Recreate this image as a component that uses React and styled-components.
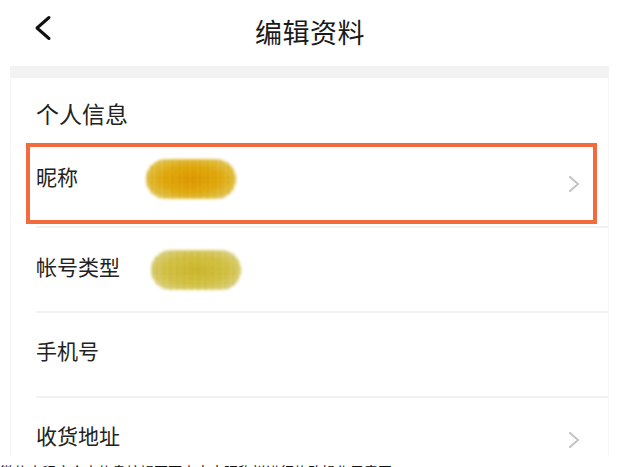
import React from 'react';
import styled, { createGlobalStyle, css } from 'styled-components';

const GlobalStyle = createGlobalStyle`
  html, body {
    margin: 0;
    padding: 0;
    background: #fff;
  }
  body {
    font-family: "Noto Sans CJK SC", "Noto Sans", sans-serif;
    color: #222;
  }
`;

const Page = styled.div`
  width: 618px;
  height: 467px;
  overflow: hidden;
  background: #fff;
`;

const Header = styled.header`
  position: relative;
  display: flex;
  justify-content: center;
  align-items: center;
  height: 62px;
  padding-bottom: 4px;
`;

const BackButton = styled.button`
  position: absolute;
  left: 32px;
  top: 14px;
  display: flex;
  padding: 0;
  border: none;
  background: none;
`;

const Title = styled.h1`
  margin: 0 0 0 2px;
  font-size: 27px;
  font-weight: 400;
  letter-spacing: 0.5px;
  color: #1a1a1a;
`;

const Card = styled.section`
  height: 378px;
  margin: 0 9px 0 10px;
  border-top: 12px solid #f2f2f2;
  border-left: 1px solid #f6f6f6;
  border-right: 1px solid #f6f6f6;
  overflow: hidden;
`;

const SectionTitle = styled.h2`
  margin: 0;
  height: 63px;
  padding: 17px 0 0 25px;
  box-sizing: border-box;
  font-size: 23px;
  line-height: 36px;
  font-weight: 400;
  color: #222;
`;

const Row = styled.div`
  position: relative;
  display: flex;
  align-items: center;
  height: 85px;
  padding: 0 28px 0 25px;
  box-sizing: border-box;

  & + & {
    border-top: 2px solid #f1f1f1;
    margin-left: 25px;
    padding-left: 0;
  }
`;

const Label = styled.span`
  width: 110px;
  flex-shrink: 0;
  margin-bottom: ${({ $lift }) => $lift * 2}px;
  font-size: 21px;
  line-height: 30px;
  color: #222;
`;

const Blob = styled.div`
  width: 90px;
  height: 40px;
  margin-left: ${({ $shift }) => $shift}px;
  margin-bottom: ${({ $lift }) => $lift * 2}px;
  border-radius: 22px;
  filter: blur(1.4px);
  ${({ $tone }) =>
    $tone === 'orange'
      ? css`
          background:
            radial-gradient(rgba(60, 40, 0, 0.7) 0.6px, transparent 1.1px) 0 0 / 4px 3px,
            radial-gradient(rgba(90, 60, 0, 0.45) 0.6px, transparent 1.1px) 2px 1px / 7px 5px,
            radial-gradient(ellipse at center, #f5a800 0%, #f7bb10 45%, #f8d650 75%, rgba(255, 240, 170, 0.2) 100%);
        `
      : css`
          background:
            radial-gradient(rgba(60, 55, 10, 0.6) 0.6px, transparent 1.1px) 0 0 / 4px 3px,
            radial-gradient(rgba(80, 70, 20, 0.45) 0.6px, transparent 1.1px) 2px 1px / 7px 5px,
            radial-gradient(ellipse at center, #dcc630 0%, #e5d24c 50%, #ede087 78%, rgba(250, 245, 200, 0.2) 100%);
        `}
`;

const Arrow = styled.svg`
  margin-left: auto;
  flex-shrink: 0;
`;

const Highlight = styled.div`
  position: absolute;
  left: 15px;
  right: 11px;
  top: 2px;
  bottom: 2px;
  border: 4px solid #f36b3c;
  pointer-events: none;
`;

const Caption = styled.p`
  margin: 5px 0 0;
  font-size: 14px;
  line-height: 20px;
  color: #111;
  white-space: nowrap;
`;

const ChevronRight = () => (
  <Arrow width="12" height="18" viewBox="0 0 12 18">
    <polyline
      points="2,2 10,9 2,16"
      fill="none"
      stroke="#c6c6c6"
      strokeWidth="2.2"
      strokeLinecap="round"
      strokeLinejoin="round"
    />
  </Arrow>
);

const App = () => {
  return (
    <Page>
      <GlobalStyle />
      <Header>
        <BackButton aria-label="返回">
          <svg width="22" height="28" viewBox="0 0 22 28">
            <polyline
              points="17,3.5 5,14 17,24.5"
              fill="none"
              stroke="#111"
              strokeWidth="3"
              strokeLinecap="round"
              strokeLinejoin="round"
            />
          </svg>
        </BackButton>
        <Title>编辑资料</Title>
      </Header>
      <Card>
        <SectionTitle>个人信息</SectionTitle>
        <Row>
          <Label $lift={8}>昵称</Label>
          <Blob $tone="orange" $shift={0} $lift={5} />
          <ChevronRight />
          <Highlight />
        </Row>
        <Row>
          <Label $lift={4}>帐号类型</Label>
          <Blob $tone="olive" $shift={5} $lift={0} />
        </Row>
        <Row>
          <Label $lift={5}>手机号</Label>
        </Row>
        <Row>
          <Label $lift={5}>收货地址</Label>
          <ChevronRight />
        </Row>
      </Card>
      <Caption>微信小程序个人信息编辑页面中点击昵称栏进行修改操作示意图</Caption>
    </Page>
  );
};

export default App;
